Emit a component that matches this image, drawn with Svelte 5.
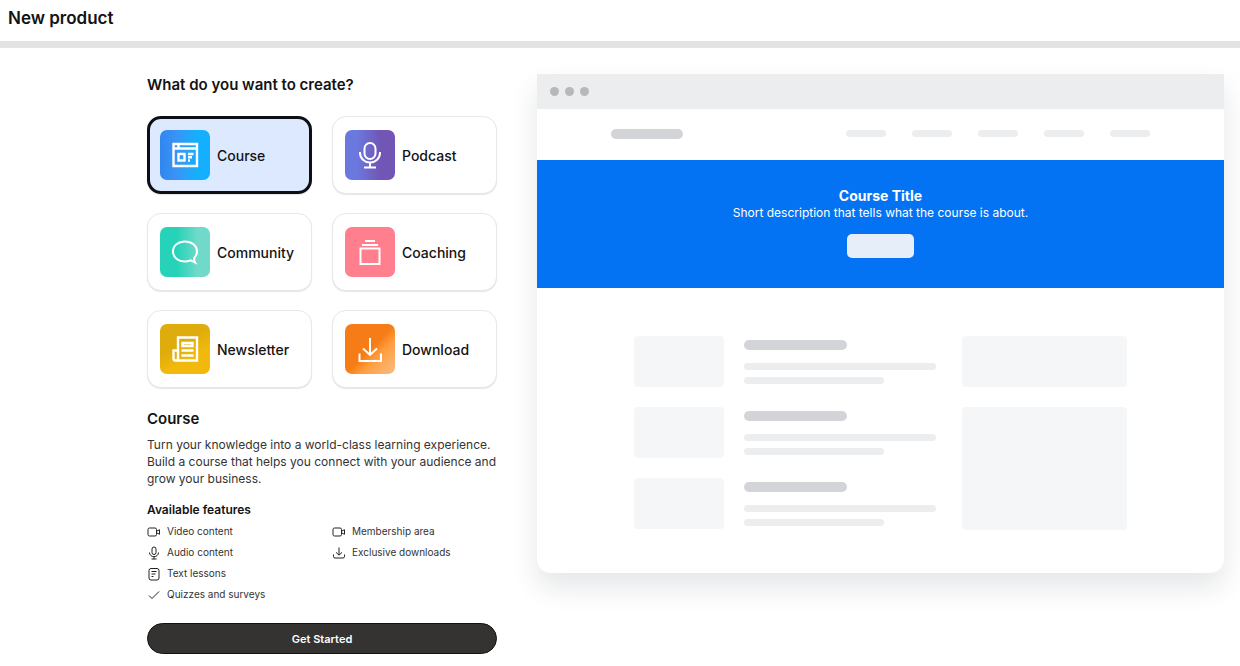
<script>
    let selected = $state("course");

    const products = [
        { id: "course", name: "Course" },
        { id: "podcast", name: "Podcast" },
        { id: "community", name: "Community" },
        { id: "coaching", name: "Coaching" },
        { id: "newsletter", name: "Newsletter" },
        { id: "download", name: "Download" }
    ];

    const features = [
        { icon: "video", text: "Video content" },
        { icon: "video", text: "Membership area" },
        { icon: "audio", text: "Audio content" },
        { icon: "save", text: "Exclusive downloads" },
        { icon: "text", text: "Text lessons" },
        { icon: "check", text: "Quizzes and surveys" }
    ];

    const select = id => () => {
        selected = id;
    };
</script>

{#snippet productIcon(id)}
    <svg viewBox="0 0 50 50" aria-hidden="true">
        {#if id === "course"}
            <path d="M13.500 14h23.500v22h-23.500zM13.500 18.500h23.500M18.500 14v4.500" />
            <path d="M18.500 24h6v6.500h-6zM28 24h5.500M28 27.300h4M28 30.500h2" />
        {:else if id === "podcast"}
            <rect x="19.500" y="13" width="11" height="16" rx="5.500" />
            <path d="M15 22v1a10 9.500 0 0 0 20 0v-1M25 32.500v4.500M19 37.500h12" />
        {:else if id === "community"}
            <path d="M34.500 30.500c1.800-1.800 2.500-3.700 2.500-6 0-5.800-5.200-10-12-10s-12 4.200-12 10 5.200 10 12 10c2 0 3.700-.4 5.500-1.200l4.500 2.200c-1-1.700-1-3.300-.5-5z" />
        {:else if id === "coaching"}
            <path d="M15.500 21.500h19v15.500h-19zM17 18h16M20 14h10" />
        {:else if id === "newsletter"}
            <path d="M18 13.500h19v23h-21.500a2 2 0 0 1-2-2v-8h4.500zM18 26v8.500a2 2 0 0 1-2.500 2" />
            <path d="M22.500 19h10v3h-10zM21.500 26.500h12M21.500 31.500h12" />
        {:else}
            <path d="M25 14v17M18 24.500l7 6.500 7-6.500M14.500 29.500v7.500h21.500v-7.500" />
        {/if}
    </svg>
{/snippet}

{#snippet featureIcon(icon)}
    <svg viewBox="0 0 14 14" aria-hidden="true">
        {#if icon === "video"}
            <rect x="1" y="3" width="8.500" height="8" rx="1.500" />
            <path d="M9.500 6.200l3-1.500v4.600l-3-1.500" />
        {:else if icon === "audio"}
            <rect x="5" y="1" width="4" height="7.500" rx="2" />
            <path d="M2.500 6.500a4.500 4.200 0 0 0 9 0M7 10.500v2.500M4.500 13h5" />
        {:else if icon === "save"}
            <path d="M7 1.500v7.500M4 6.300l3 2.900 3-2.900M1.500 8.500v2a1.500 1.500 0 0 0 1.500 1.500h8a1.500 1.500 0 0 0 1.500-1.500v-2" />
        {:else if icon === "text"}
            <rect x="2" y="1.500" width="10" height="11.500" rx="2" />
            <path d="M4.500 4.500h5M4.500 7h4M4.500 9.500h2" />
        {:else}
            <path d="M2 7.500l3 3 7-7" />
        {/if}
    </svg>
{/snippet}

<header>
    <h1>New product</h1>
</header>

<main>
    <section class="picker">
        <h2>What do you want to create?</h2>

        <div class="products">
            {#each products as product}
                <button
                    type="button"
                    class="product"
                    class:selected={selected === product.id}
                    aria-pressed={selected === product.id}
                    onclick={select(product.id)}
                >
                    <span class="tile {product.id}">{@render productIcon(product.id)}</span>
                    {product.name}
                </button>
            {/each}
        </div>

        <h2 class="name">Course</h2>
        <p>
            Turn your knowledge into a world-class learning experience. Build a course
            that helps you connect with your audience and grow your business.
        </p>

        <h3>Available features</h3>
        <ul>
            {#each features as feature, i}
                <li class:full={i > 3}>
                    {@render featureIcon(feature.icon)}
                    {feature.text}
                </li>
            {/each}
        </ul>

        <button type="button" class="start">Get Started</button>
    </section>

    <section class="preview" aria-label="Preview">
        <div class="bar"><i></i><i></i><i></i></div>
        <div class="nav">
            <span class="line strong"></span>
            <div class="links">
                {#each Array(5) as _}
                    <span class="line"></span>
                {/each}
            </div>
        </div>
        <div class="hero">
            <h2>Course Title</h2>
            <p>Short description that tells what the course is about.</p>
            <span class="cta"></span>
        </div>
        <div class="content">
            <div class="lessons">
                {#each Array(3) as _}
                    <div class="lesson">
                        <span class="block"></span>
                        <div class="lines">
                            <span class="line strong"></span>
                            <span class="line"></span>
                            <span class="line short"></span>
                        </div>
                    </div>
                {/each}
            </div>
            <div class="aside">
                <span class="block"></span>
                <span class="block tall"></span>
            </div>
        </div>
    </section>
</main>

<style>
    :global(body) {
        margin: 0;
        background: #fff;
        color: #131313;
        font-family: Inter, "Liberation Sans", sans-serif;
    }

    h1, h2, h3, p, ul {
        margin: 0;
        padding: 0;
    }

    h1, h2 {
        font-size: 15px;
        line-height: 22px;
        font-weight: 600;
    }

    h1 {
        font-size: 17px;
    }

    header {
        padding: 7px 8px 12px;
        border-bottom: 7px solid #e3e3e3;
    }

    main {
        display: flex;
        align-items: flex-start;
        gap: 40px;
        padding: 26px 16px 11px 147px;
    }

    .picker {
        flex: 0 0 350px;
    }

    .products {
        display: grid;
        grid-template-columns: 1fr 1fr;
        gap: 19px 20px;
        margin-top: 20px;
    }

    button {
        font-family: inherit;
        cursor: pointer;
    }

    .product {
        display: flex;
        align-items: center;
        gap: 7px;
        height: 78px;
        box-sizing: border-box;
        padding: 0 12px;
        border: 1px solid #e8e8e8;
        border-radius: 14px;
        background: #fff;
        box-shadow: 0 1px 1px rgba(0, 0, 0, 0.1);
        color: #131313;
        font-size: 14px;
        font-weight: 500;
    }

    .product.selected {
        border: 3px solid #0c0f14;
        padding: 0 10px;
        background: #dce9ff;
    }

    .tile {
        width: 50px;
        height: 50px;
        border-radius: 7px;
    }

    .tile svg {
        display: block;
        fill: none;
        stroke: #fff;
        stroke-width: 2;
    }

    .course { background: linear-gradient(90deg, #2f86ef, #3b92f4 30%, #14b0ff 75%); }
    .podcast { background: linear-gradient(90deg, #6b78de 25%, #7156b5 70%); }
    .community { background: linear-gradient(90deg, #27d3b8 35%, #70d9ca 75%); }
    .coaching { background: #ff7f8f; }
    .newsletter { background: linear-gradient(150deg, #dfac0d 40%, #f1b90b 65%); }
    .download { background: linear-gradient(135deg, #f57c16 50%, #ff9d3c 65%, #fbb472 90%); }

    .course svg, .newsletter svg {
        stroke-width: 2.4;
    }

    .name {
        margin-top: 20px;
    }

    .picker p {
        margin-top: 6px;
        color: #333;
        font-size: 12px;
        line-height: 17px;
    }

    h3 {
        margin-top: 15px;
        font-size: 12px;
        line-height: 16px;
        font-weight: 600;
    }

    ul {
        display: grid;
        grid-template-columns: 1fr 1fr;
        column-gap: 20px;
        margin-top: 3px;
        list-style: none;
    }

    li {
        display: flex;
        align-items: center;
        gap: 6px;
        color: #333;
        font-size: 10px;
        line-height: 21px;
    }

    li.full {
        grid-column: 1 / -1;
    }

    li svg {
        width: 14px;
        height: 14px;
        fill: none;
        stroke: #222;
        stroke-width: 1;
    }

    .start {
        display: block;
        width: 100%;
        height: 31px;
        margin-top: 18px;
        border: 1px solid #131313;
        border-radius: 16px;
        background: #343331;
        color: #fff;
        font-size: 11px;
        font-weight: 600;
    }

    .preview {
        flex: 1;
        min-width: 0;
        border-radius: 0 0 14px 14px;
        background: #fff;
        box-shadow: 0 14px 28px rgba(20, 30, 50, 0.11);
    }

    .bar {
        display: flex;
        align-items: center;
        gap: 6px;
        height: 35px;
        padding-left: 13px;
        background: #ecedef;
    }

    .bar i {
        width: 9px;
        height: 9px;
        border-radius: 50%;
        background: #b7b8ba;
    }

    .line {
        display: block;
        height: 7px;
        border-radius: 4px;
        background: #ecedef;
    }

    .line.strong {
        height: 10px;
        border-radius: 5px;
        background: #d3d4d8;
    }

    .nav {
        display: flex;
        align-items: center;
        justify-content: space-between;
        height: 49px;
        padding: 0 74px 2px;
    }

    .nav .strong {
        width: 72px;
    }

    .links {
        display: flex;
        gap: 26px;
    }

    .links .line {
        width: 40px;
    }

    .hero {
        display: flex;
        flex-direction: column;
        align-items: center;
        padding: 27px 16px 30px;
        background: #0373f3;
        color: #fff;
    }

    .hero h2 {
        font-size: 14px;
        line-height: 18px;
        font-weight: 700;
    }

    .hero p {
        font-size: 12px;
        line-height: 16px;
    }

    .cta {
        width: 67px;
        height: 24px;
        margin-top: 13px;
        border-radius: 5px;
        background: #e6eef9;
    }

    .content {
        display: flex;
        justify-content: center;
        gap: 26px;
        padding: 48px 16px 43px;
    }

    .lessons, .aside {
        display: flex;
        flex-direction: column;
        gap: 20px;
    }

    .lesson {
        display: flex;
        gap: 20px;
    }

    .block {
        height: 51px;
        border-radius: 4px;
        background: #f5f6f8;
    }

    .lesson .block {
        width: 90px;
    }

    .lines {
        width: 192px;
        padding-top: 4px;
    }

    .lines .strong {
        width: 103px;
        margin-bottom: 13px;
    }

    .lines .short {
        width: 140px;
        margin-top: 7px;
    }

    .aside {
        width: 165px;
    }

    .aside .tall {
        height: 123px;
    }
</style>
